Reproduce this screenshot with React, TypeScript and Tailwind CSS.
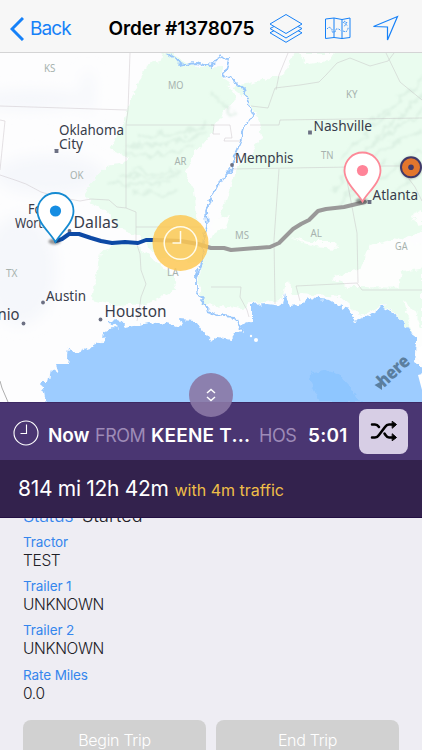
import type { ReactNode } from "react";

type Place = {
    name: string;
    x: number;
    y: number;
    width: number;
    size: number;
    dot?: [number, number];
    round?: boolean;
};

type Field = {
    label: string;
    value: string;
};

const cities: Place[] = [
    { name: "Oklahoma", x: 59, y: 134.8, width: 65, size: 14, dot: [56.5, 151] },
    { name: "City", x: 59, y: 149, width: 24, size: 14 },
    { name: "Nashville", x: 313.5, y: 130.7, width: 58.5, size: 14, dot: [310, 132.5] },
    { name: "Memphis", x: 235, y: 162.7, width: 58.5, size: 14, dot: [232, 165], round: true },
    { name: "Atlanta", x: 372.5, y: 199.7, width: 45.5, size: 14, dot: [369.5, 202] },
    { name: "Fort", x: 28, y: 213.7, width: 24, size: 14 },
    { name: "Worth", x: 15, y: 227.7, width: 35, size: 14 },
    { name: "Dallas", x: 73.5, y: 227.8, width: 45, size: 16, dot: [69.5, 231], round: true },
    { name: "Austin", x: 46, y: 300.7, width: 40, size: 14, dot: [43, 302.5], round: true },
    { name: "Houston", x: 104.5, y: 316.8, width: 62, size: 16, dot: [100.5, 319.5], round: true },
    { name: "San Antonio", x: -65, y: 320, width: 84.5, size: 16, dot: [23.5, 323.5], round: true },
];

const states: Place[] = [
    { name: "KS", x: 44, y: 72, width: 11.5, size: 11 },
    { name: "MO", x: 168, y: 89, width: 15.5, size: 11 },
    { name: "AR", x: 174.5, y: 165, width: 12, size: 11 },
    { name: "OK", x: 70, y: 178.7, width: 13.5, size: 11 },
    { name: "KY", x: 346, y: 98, width: 11.5, size: 11 },
    { name: "TN", x: 321, y: 159, width: 12.5, size: 11 },
    { name: "TX", x: 6, y: 276.7, width: 11.5, size: 11 },
    { name: "LA", x: 167, y: 276, width: 11.5, size: 11 },
    { name: "MS", x: 235, y: 239, width: 14, size: 11 },
    { name: "AL", x: 310.5, y: 237, width: 11.5, size: 11 },
    { name: "GA", x: 395, y: 250, width: 12.5, size: 11 },
];

const fields: Field[] = [
    { label: "Tractor", value: "TEST" },
    { label: "Trailer 1", value: "UNKNOWN" },
    { label: "Trailer 2", value: "UNKNOWN" },
    { label: "Rate Miles", value: "0.0" },
];

function Label({ place, fill }: { place: Place; fill: string }) {
    return (
        <text x={place.x} y={place.y} fontSize={place.size} textLength={place.width} lengthAdjust="spacingAndGlyphs" fill={fill}>
            {place.name}
        </text>
    );
}

function Pin({ x, y, color, dot }: { x: number; y: number; color: string; dot: string }) {
    return (
        <g transform={`translate(${x} ${y})`}>
            <ellipse cx="-1" cy="30.5" rx="6" ry="3" fill="#333" opacity="0.5" filter="url(#soft)" />
            <path d="M0 31C-5 22-18 12-18 0A18 18 0 0 1 18 0C18 12 5 22 0 31Z" fill="#fff" stroke={color} strokeWidth="1.8" />
            <circle r="5.6" fill={dot} />
        </g>
    );
}

function RouteMap() {
    return (
        <svg className="block h-[349px] w-full" viewBox="0 53 422 349" fontFamily="'Noto Sans', sans-serif">
            <defs>
                <filter id="rough" x="-5%" y="-5%" width="110%" height="110%">
                    <feTurbulence type="fractalNoise" baseFrequency="0.14" numOctaves="3" seed="4" />
                    <feDisplacementMap in="SourceGraphic" scale="8" xChannelSelector="R" yChannelSelector="G" />
                </filter>
                <filter id="soft" x="-50%" y="-50%" width="200%" height="200%">
                    <feGaussianBlur stdDeviation="1.3" />
                </filter>
                <filter id="relief" x="-10%" y="-10%" width="120%" height="120%">
                    <feTurbulence type="fractalNoise" baseFrequency="0.09" numOctaves="3" seed="9" />
                    <feDisplacementMap in="SourceGraphic" scale="14" xChannelSelector="R" yChannelSelector="G" />
                    <feGaussianBlur stdDeviation="0.9" />
                </filter>
                <filter id="haze" x="-50%" y="-50%" width="200%" height="200%">
                    <feGaussianBlur stdDeviation="7" />
                </filter>
            </defs>
            <rect y="53" width="422" height="349" fill="#fdfdfe" />

            {/* pale relief on the plains */}
            <g fill="#f5f7fb" filter="url(#haze)">
                <ellipse cx="30" cy="100" rx="55" ry="10" />
                <ellipse cx="88" cy="92" rx="6" ry="22" />
                <ellipse cx="50" cy="175" rx="55" ry="20" />
                <ellipse cx="20" cy="270" rx="36" ry="55" />
            </g>

            {/* woodland */}
            <g fill="#eafcef" filter="url(#rough)">
                <path d="M165 45L162 60 146 65 137 88 129 100 125 124 111 147 114 152 128 157 124 163 107 166 85 190 90 203 108 212 118 228 136 234 160 260 200 262 205 230 198 225 194 190 184 172 196 152 211 133 225 110 237 98 224 78 222 66 200 67 182 62Z" />
                <path d="M100 252L128 241 153 258 172 274 176 290 147 304 116 306 92 300Z" />
                <path d="M232 87L283 75 298 45H440V225L400 240 375 255 358 270 330 278 350 287 422 288V345L410 330 395 313 382 305 362 316 340 297 300 294 288 296 280 300 250 304 241 309 202 303 198 280 206 250 216 228 228 195 234 174 253 150 262 135 258 117 250 102Z" />
                <path d="M401 270L422 265V292H398Z" />
            </g>
            <g fill="#fdfefd" filter="url(#rough)">
                <path d="M290 238L310 242 335 242 337 249 315 247Z" />
                <path d="M334 276L360 270 370 245 392 240 425 245V268L402 272 398 287 360 287 352 282Z" />
                <path d="M298 53H335L324 62 308 64Z" />
                <path d="M403 298L413 308 422 330V350L413 335Z" />
                <path d="M412 215L422 210V225L416 226Z" />
                <path d="M213 220L231 214 225 228 212 234Z" />
                <path d="M285 285L289 280 292 299 282 302Z" />
            </g>

            {/* mountain shading */}
            <g fill="none" stroke="#cfe6d8" strokeWidth="2.6" opacity="0.5" filter="url(#relief)">
                <path d="M128 145C150 142 168 150 204 132M126 155C150 151 170 161 190 146M132 170C148 169 158 179 180 170M108 184C126 178 148 191 170 183M118 176C138 172 156 184 178 176M140 138C160 134 180 138 206 124M134 190C150 192 160 196 176 190" />
                <path d="M331 194C345 170 362 150 384 137 399 125 410 120 422 109M348 180C363 158 383 148 422 132M358 160C378 134 393 124 422 94M380 181C394 168 409 157 422 150M370 122C390 108 404 100 422 77M340 160C356 140 372 128 392 112M340 205C352 190 366 176 384 160M396 190L422 168M211 94L232 112" />
            </g>

            {/* sea */}
            <g fill="#9dccff" filter="url(#rough)">
                <path d="M46 410L43 392 41 383 49 383 51 369 59 373 56 364 67 364 69 349 78 352 87 348 97 345 103 341 104 332 113 327 118 329 109 321 119 320 125 327 148 322 165 324 183 328 180 320 195 321 203 331 210 340 218 337 231 339 235 333 245 332 240 326 251 322 251 305 268 304 283 306 285 293 289 305 301 304 307 298 330 300 342 307 350 309 355 321 369 315 382 306 395 314 410 330 417 341 415 362 422 367 430 410Z" />
            </g>
            <path d="M309 379L313 372 325 370 338 374 349 386 361 402H320L314 390Z" fill="#8ec6ff" filter="url(#rough)" />
            <g fill="#fff">
                <circle cx="256" cy="340" r="2" />
                <circle cx="251" cy="336" r="1.2" />
                <path d="M422 362L416 357 418 348 422 346ZM422 390L418 375 422 374Z" />
            </g>

            {/* rivers */}
            <g fill="none" stroke="#98c6fb" strokeWidth="1.8" filter="url(#rough)">
                <path d="M166 53L174 58 181 66 195 63 211 66 218 58 221 53" />
                <path d="M218 58L229 59 225 74 244 90 248 103 254 114 245 125 241 140 234 156 232 167 221 182 212 194 206 211 207 226 203 246 202 263 196 278 196 292 206 304 208 312 224 317 236 318 239 326 244 333" />
            </g>

            {/* state lines */}
            <g fill="none" stroke="#b9aeb6" strokeWidth="0.6" opacity="0.6">
                <path d="M130 53L128 110M0 106L127 110M128 110L126 125H214L213 134H220M126 125V208M0 120L5 121 0 170" />
                <path d="M0 175L15 180 26 184 41 192 58 197 69 199 80 201 91 199 109 200 117 207 126 208 136 212V242L140 254 141 270 146 284 141 297 139 311 137 321" />
                <path d="M136 227H202M211 125H230L232 138H225L224 141H241M232 169L350 167 386 166 420 166M250 125H279L280 120 422 118M279 169L274 240 275 304M345 170L357 233 358 283" />
                <path d="M211 287H241L240 297 247 310 249 317M300 301L296 286 357 283 362 290H422M251 106L268 108 275 88 300 85 319 82 326 75 337 63 350 58 370 66 388 61 394 53M288 53L279 75 276 90" />
                <path d="M400 167L415 187 422 201M386 53L400 82 422 100" />
            </g>
            <path d="M0 381L2 388 8 402" fill="none" stroke="#777" strokeWidth="0.6" />

            {states.map(place => <Label key={place.name} place={place} fill="#a7b2ae" />)}
            {cities.map(place => (
                <g key={place.name}>
                    {place.dot && (
                        <rect x={place.dot[0] - 1.9} y={place.dot[1] - 1.9} width="3.8" height="3.8" rx={place.round ? 1.9 : 0.2} fill="#6c7083" />
                    )}
                    <Label place={place} fill="#383c4b" />
                </g>
            ))}

            {/* route: driven part in blue, the rest in gray */}
            <g fill="none" strokeWidth="4" strokeLinecap="round" strokeLinejoin="round">
                <path d="M56 241L62 239 69 234 79 234 91 238 101 241 112 243 125 242 138 243 146 240 155 240" stroke="#0d49a5" />
                <path d="M155 240L181 241 198 244 211 248 224 248 231 250 270 247 279 243 293 229 301 224 309 220 318 211 326 209 344 207 365 202" stroke="#9a9999" />
            </g>
            <circle cx="180.5" cy="243" r="28" fill="#fdc651" opacity="0.83" />
            <circle cx="180.5" cy="243" r="16.3" fill="none" stroke="#fffbe9" strokeWidth="1.5" />
            <path d="M180.5 231V243H172.5" fill="none" stroke="#fffbe9" strokeWidth="1.5" />
            <Pin x={55.5} y={211} color="#168bd2" dot="#168de2" />
            <Pin x={362.5} y={170.5} color="#fd8998" dot="#ff8498" />
            <circle cx="411" cy="168" r="11" fill="#777" opacity="0.35" filter="url(#soft)" />
            <circle cx="411" cy="167.3" r="10" fill="#e3762d" stroke="#403969" strokeWidth="2" />
            <circle cx="411" cy="167.3" r="2.8" fill="#403969" />

            {/* map provider mark */}
            <g fill="#5b7fa0">
                <path d="M374.5 385L382 381V390Z" />
                <text transform="translate(384 388) rotate(-43)" fontSize="18" fontWeight="900" textLength="37" lengthAdjust="spacingAndGlyphs">here</text>
            </g>
        </svg>
    );
}

function Header() {
    return (
        <header className="flex h-[53px] shrink-0 items-start border-b border-[#d4d4d5] bg-[#f7f7f7] text-[#1681f8]">
            <div className="flex w-[108.5px] pt-[17px] pl-[10px]">
                <svg className="h-6 w-[14px]" viewBox="0 0 14 24" fill="none" stroke="currentColor" strokeWidth="3">
                    <path d="M13 1L2 12L13 23" />
                </svg>
                <span className="ml-[6px] text-[19px] leading-6 tracking-[-0.9px]">Back</span>
            </div>
            <h1 className="w-[160px] pt-[17px] text-[19px] leading-6 font-semibold tracking-[-0.1px] whitespace-nowrap text-black">Order #1378075</h1>
            <svg className="mt-[13px] h-[31px] w-[34px]" viewBox="0 0 34 31" fill="none" stroke="currentColor" strokeWidth="1">
                <path d="M17 1.5L33 11L17 20.5L1 11Z" />
                <path d="M5 13.5L1 15.5L17 25L33 15.5L29 13.5M5 17.7L1 19.8L17 29.3L33 19.8L29 17.7" />
            </svg>
            <svg className="mt-[17px] ml-[22px] h-[23px] w-[26px]" viewBox="0 0 26 23" fill="none" stroke="currentColor" strokeWidth="1">
                <path d="M.5 2L9 1L17 2.5L25 1V20.5L17 21.5L9 20.5L.5 21.5ZM9 1V20.5M17 2.5V21.5" />
                <path d="M2 12L4 10L7 12L7 15L10 15L11 12L14 12L16 14M18 14L21 15L23 12L23 10M18 5L23 9M22 5L19 10M19 4L22 6" strokeWidth=".8" strokeDasharray="2 1" />
            </svg>
            <svg className="mt-[15px] ml-[21px] h-[27px] w-[27px]" viewBox="0 0 27 27" fill="none" stroke="currentColor" strokeWidth="1.2">
                <path d="M25.5 1.5L15.5 25V12L1.5 11.5Z" />
            </svg>
        </header>
    );
}

function TripBar() {
    return (
        <section className="relative shrink-0 text-white">
            <div className="absolute top-[-29px] left-[189px] flex h-11 w-11 items-center justify-center rounded-full bg-[#8b78a5]/90">
                <svg className="h-[14px] w-3" viewBox="0 0 12 14" fill="none" stroke="currentColor" strokeWidth="1.5">
                    <path d="M2 5L6 1.5L10 5M2 9L6 12.5L10 9" />
                </svg>
            </div>
            <div className="flex h-[58px] items-center border-t border-[#3d2963] bg-[#4a3672] pl-[13px]">
                <svg className="mt-[3px] h-[26px] w-[26px] shrink-0" viewBox="0 0 26 26" fill="none" stroke="currentColor" strokeWidth="1.1">
                    <circle cx="13" cy="13" r="12" />
                    <path d="M13.5 4.5V13.5H7.5" />
                </svg>
                <div className="mt-[9px] flex h-6 items-baseline whitespace-nowrap">
                    <b className="ml-[9px] w-[47px] text-[19px] leading-6 font-semibold tracking-[-0.1px]">Now</b>
                    <span className="w-[56px] text-[18px] leading-6 tracking-[-0.5px] text-[#9d8bb7]">FROM</span>
                    <b className="w-[108px] text-[19px] leading-6 font-semibold tracking-[0.2px]">KEENE T...</b>
                    <span className="w-[49px] text-[18px] leading-6 tracking-[-0.4px] text-[#9d8bb7]">HOS</span>
                    <b className="w-[51px] text-[19px] leading-6 font-semibold tracking-[0.2px]">5:01</b>
                </div>
                <button className="mb-[1px] flex h-[45px] w-[49px] shrink-0 items-center justify-center rounded-lg bg-[#d7cee5] text-black">
                    <svg className="h-[22px] w-7" viewBox="0 0 28 22" fill="none" stroke="currentColor" strokeWidth="2.5" strokeLinecap="round">
                        <path d="M2 17.5H5C7 17.5 8 16.5 9 15L15 7C16 5.5 17 4.5 19 4.5H23M2 4.5H5C7 4.5 8 5.5 9 7M14.5 13.5L15.5 15C16.5 16.5 17.5 17.5 19 17.5H23" />
                        <path d="M22.5 1.5L26.5 4.5L22.5 8ZM22.5 14L26.5 17.5L22.5 20.5Z" fill="currentColor" strokeWidth="1" />
                    </svg>
                </button>
            </div>
            <div className="flex h-[58px] items-baseline border-b border-[#230f42] bg-[#33224d] pt-[17px] pl-[18px] whitespace-nowrap">
                <span className="w-[156.5px] text-[21px] leading-6 tracking-[-0.3px]">814 mi 12h 42m</span>
                <span className="text-[16px] leading-6 text-[#efbe48]">with 4m traffic</span>
            </div>
        </section>
    );
}

function TripButton({ children }: { children: ReactNode }) {
    return (
        <button className="h-10 flex-1 rounded-lg bg-[#d1d1d1] text-center text-[16px] leading-6 font-light tracking-[-0.3px] text-white">
            {children}
        </button>
    );
}

export default function App() {
    return (
        <div className="flex h-[750px] w-[422px] flex-col overflow-hidden bg-[#eeedf3] font-['Inter',sans-serif]">
            <Header />
            <main className="shrink-0">
                <RouteMap />
            </main>
            <TripBar />
            <div className="min-h-0 flex-1 overflow-hidden px-[23px]">
                <div className="-mt-[12px] flex h-5 gap-[9px] text-[18px] leading-5 font-light tracking-[-0.3px]">
                    <span className="w-[50px] text-[#3586ed]">Status</span>
                    <span className="tracking-[0.1px] text-[#202026]">Started</span>
                </div>
                <dl className="mt-[8px]">
                    {fields.map(field => (
                        <div key={field.label} className="h-[44.2px]">
                            <dt className="text-[13.5px] leading-[17px] tracking-[-0.1px] text-[#3586ed]">{field.label}</dt>
                            <dd className="text-[15.5px] leading-[19px] font-light tracking-[-0.35px] text-[#202026]">{field.value}</dd>
                        </div>
                    ))}
                </dl>
                <div className="mt-[9px] flex gap-[10px]">
                    <TripButton>Begin Trip</TripButton>
                    <TripButton>End Trip</TripButton>
                </div>
            </div>
        </div>
    );
}
